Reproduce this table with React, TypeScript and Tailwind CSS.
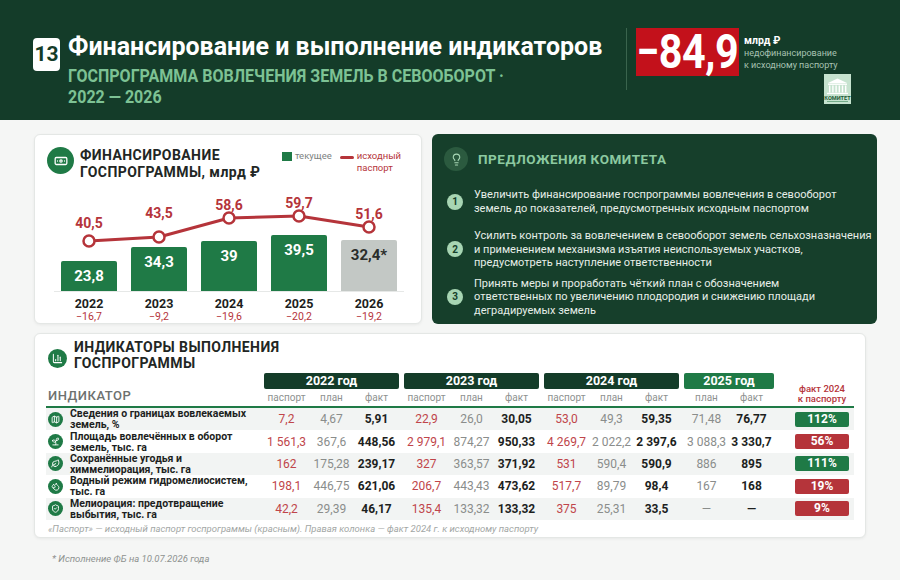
import {
  Banknote,
  ChartColumn,
  Droplets,
  Lightbulb,
  Map as MapIcon,
  ShieldCheck,
  Sprout,
  Leaf,
} from "lucide-react";
import type { LucideIcon } from "lucide-react";

type Bar = {
  year: string;
  value: string;
  h: number;
  diff: string;
  plan: string;
  py: number;
  ly: number;
  muted?: boolean;
};

// y values are measured from the top of the 97px chart box
const BARS: Bar[] = [
  { year: "2022", value: "23,8", h: 30, diff: "−16,7", plan: "40,5", py: 45, ly: 32 },
  { year: "2023", value: "34,3", h: 44, diff: "−9,2", plan: "43,5", py: 41, ly: 22 },
  { year: "2024", value: "39", h: 50, diff: "−19,6", plan: "58,6", py: 22, ly: 14 },
  { year: "2025", value: "39,5", h: 56, diff: "−20,2", plan: "59,7", py: 20, ly: 12 },
  { year: "2026", value: "32,4*", h: 51, diff: "−19,2", plan: "51,6", py: 31, ly: 23, muted: true },
];

const PROPOSALS: { gap: string; lines: string[] }[] = [
  {
    gap: "mt-0",
    lines: [
      "Увеличить финансирование госпрограммы вовлечения в севооборот",
      "земель до показателей, предусмотренных исходным паспортом",
    ],
  },
  {
    gap: "mt-[14px]",
    lines: [
      "Усилить контроль за вовлечением в севооборот земель сельхозназначения",
      "и применением механизма изъятия неиспользуемых участков,",
      "предусмотреть наступление ответственности",
    ],
  },
  {
    gap: "mt-[7px]",
    lines: [
      "Принять меры и проработать чёткий план с обозначением",
      "ответственных по увеличению плодородия и снижению площади",
      "деградируемых земель",
    ],
  },
];

type Group = { label: string; cols: string[]; tone: string };

const GROUPS: Group[] = [
  { label: "2022 год", cols: ["паспорт", "план", "факт"], tone: "bg-[#143c29]" },
  { label: "2023 год", cols: ["паспорт", "план", "факт"], tone: "bg-[#143c29]" },
  { label: "2024 год", cols: ["паспорт", "план", "факт"], tone: "bg-[#143c29]" },
  { label: "2025 год", cols: ["план", "факт"], tone: "bg-[#1f7a46]" },
];

type Row = {
  icon: LucideIcon;
  name: [string, string];
  years: string[][];
  pct: string;
  good: boolean;
};

const ROWS: Row[] = [
  {
    icon: MapIcon,
    name: ["Сведения о границах вовлекаемых", "земель, %"],
    years: [
      ["7,2", "4,67", "5,91"],
      ["22,9", "26,0", "30,05"],
      ["53,0", "49,3", "59,35"],
      ["71,48", "76,77"],
    ],
    pct: "112%",
    good: true,
  },
  {
    icon: Sprout,
    name: ["Площадь вовлечённых в оборот", "земель, тыс. га"],
    years: [
      ["1 561,3", "367,6", "448,56"],
      ["2 979,1", "874,27", "950,33"],
      ["4 269,7", "2 022,2", "2 397,6"],
      ["3 088,3", "3 330,7"],
    ],
    pct: "56%",
    good: false,
  },
  {
    icon: Leaf,
    name: ["Сохранённые угодья и", "химмелиорация, тыс. га"],
    years: [
      ["162", "175,28", "239,17"],
      ["327", "363,57", "371,92"],
      ["531", "590,4", "590,9"],
      ["886", "895"],
    ],
    pct: "111%",
    good: true,
  },
  {
    icon: Droplets,
    name: ["Водный режим гидромелиосистем,", "тыс. га"],
    years: [
      ["198,1", "446,75", "621,06"],
      ["206,7", "443,43", "473,62"],
      ["517,7", "89,79", "98,4"],
      ["167", "168"],
    ],
    pct: "19%",
    good: false,
  },
  {
    icon: ShieldCheck,
    name: ["Мелиорация: предотвращение", "выбытия, тыс. га"],
    years: [
      ["42,2", "29,39", "46,17"],
      ["135,4", "133,32", "133,32"],
      ["375", "25,31", "33,5"],
      ["—", "—"],
    ],
    pct: "9%",
    good: false,
  },
];

const CELL_TONE: Record<string, string> = {
  паспорт: "text-[#c0454a]",
  план: "text-[#8a8d8b]",
  факт: "font-bold text-[#1d1f1e]",
};

function Logo() {
  return (
    <svg width="27" height="30" viewBox="0 0 27 30">
      <rect width="27" height="30" fill="#c6e3cf" />
      <path d="M4 9 L13.5 4.5 L23 9 Z" fill="#ffffff" />
      <rect x="4" y="9.5" width="19" height="1.4" fill="#ffffff" />
      {[5, 8.2, 11.4, 14.6, 17.8, 21].map((x) => (
        <rect key={x} x={x} y="11.5" width="1.4" height="7" fill="#ffffff" />
      ))}
      <rect x="3" y="18.8" width="21" height="1.3" fill="#ffffff" />
      <text
        x="13.5"
        y="25.5"
        fontSize="5.6"
        fontWeight="700"
        textAnchor="middle"
        fill="#1c5a36"
        fontFamily="Roboto, sans-serif"
      >
        КОМИТЕТ
      </text>
      <rect x="3" y="27" width="21" height="0.8" fill="#5f9d77" />
    </svg>
  );
}

function Header() {
  return (
    <header className="flex h-[120px] bg-[#143c29]">
      <div className="flex w-[626px] items-start pl-[33px] pt-[33px]">
        <div className="mt-[5px] flex h-[33px] w-[27px] items-center justify-center rounded-[4px] bg-white text-[21px] font-bold text-[#143c29]">
          13
        </div>
        <div className="ml-[8px]">
          <h1 className="text-[25px] font-bold leading-[28px] text-white">
            Финансирование и выполнение индикаторов
          </h1>
          <div className="mt-[4px] origin-left scale-x-[0.89] whitespace-nowrap text-[18px] font-bold uppercase leading-[21px] text-[#7dc294]">
            Госпрограмма вовлечения земель в севооборот ·
            <br />
            2022 — 2026
          </div>
        </div>
      </div>
      <div className="mt-[28px] flex h-[62px] border-l border-[#3a644d] pl-[9px]">
        <div className="flex h-[48px] w-[103px] items-center justify-center bg-[#c3111b]">
          <span className="scale-x-[0.86] text-[48px] font-bold leading-none tracking-[-0.5px] text-white">
            −84,9
          </span>
        </div>
        <div className="ml-[5px] pt-[7px]">
          <div className="text-[10.5px] font-bold leading-[12px] text-white">млрд ₽</div>
          <div className="text-[9px] leading-[12px] text-[#a7c2b2]">недофинансирование</div>
          <div className="text-[9px] leading-[12px] text-[#a7c2b2]">к исходному паспорту</div>
          <div className="ml-[80px] mt-[3px]">
            <Logo />
          </div>
        </div>
      </div>
    </header>
  );
}

function FundingCard() {
  return (
    <div className="flex h-[190px] w-[388px] flex-col rounded-[6px] border border-[#e4e7e5] bg-white pl-[12px] pr-[20px] pt-[12px] shadow-[0_1px_3px_rgba(0,0,0,0.06)]">
      <div className="flex h-[30px] items-start">
        <div className="flex h-[27px] w-[27px] items-center justify-center rounded-full bg-[#1f7a46]">
          <Banknote size={14} color="#ffffff" strokeWidth={2.2} />
        </div>
        <div className="ml-[6px] whitespace-nowrap text-[14px] font-bold uppercase leading-[17px] tracking-[0.03em] text-[#222624]">
          Финансирование
          <br />
          госпрограммы, <span className="normal-case">млрд ₽</span>
        </div>
        <div className="ml-auto flex items-start pt-[3px]">
          <div className="mt-[2px] h-[9px] w-[10px] bg-[#1f7a46]" />
          <span className="ml-[3px] text-[9.5px] leading-[12px] text-[#7d817f]">текущее</span>
          <div className="ml-[8px] mt-[6px] h-[3px] w-[14px] rounded-full bg-[#b5343a]" />
          <span className="ml-[3px] text-[9.5px] leading-[12px] text-[#b5343a]">
            исходный
            <br />
            паспорт
          </span>
        </div>
      </div>
      <div className="relative ml-[7px] mt-[19px] flex h-[97px] w-[350px] items-end border-b border-[#e6e8e7]">
        {BARS.map((b) => (
          <div key={b.year} className="flex w-[70px] justify-center">
            <div
              className={`flex w-[56px] justify-center rounded-t-[2px] pt-[6px] text-[15px] font-bold leading-[18px] ${
                b.muted ? "bg-[#c3c8c5] text-[#2a2d2b]" : "bg-[#1f7a46] text-white"
              }`}
              style={{ height: b.h }}
            >
              {b.value}
            </div>
          </div>
        ))}
        <svg className="absolute left-0 top-0 overflow-visible" width="350" height="97">
          <polyline
            points={BARS.map((b, i) => `${35 + i * 70},${b.py}`).join(" ")}
            fill="none"
            stroke="#b5343a"
            strokeWidth="3"
            strokeLinejoin="round"
          />
          {BARS.map((b, i) => (
            <g key={b.year}>
              <circle cx={35 + i * 70} cy={b.py} r="5.5" fill="#ffffff" stroke="#b5343a" strokeWidth="2.5" />
              <text
                x={35 + i * 70}
                y={b.ly}
                textAnchor="middle"
                fontSize="14"
                fontWeight="700"
                fill="#b5343a"
                fontFamily="Roboto, sans-serif"
              >
                {b.plan}
              </text>
            </g>
          ))}
        </svg>
      </div>
      <div className="ml-[7px] flex w-[350px]">
        {BARS.map((b) => (
          <div key={b.year} className="w-[70px] text-center">
            <div className="mt-[5px] text-[12.5px] font-bold leading-[14px] text-[#1d1f1e]">{b.year}</div>
            <div className="text-[10.5px] leading-[12px] text-[#b5343a]">{b.diff}</div>
          </div>
        ))}
      </div>
    </div>
  );
}

function ProposalsCard() {
  return (
    <div className="h-[190px] w-[445px] rounded-[6px] bg-[#163f2b] pl-[12px] pt-[13px]">
      <div className="flex items-center">
        <div className="flex h-[24px] w-[24px] items-center justify-center rounded-full bg-[#2b5a3f]">
          <Lightbulb size={13} color="#a9d8b6" strokeWidth={2} />
        </div>
        <span className="ml-[10px] text-[13.5px] font-bold uppercase tracking-[0.04em] text-[#8cc9a0]">
          Предложения комитета
        </span>
      </div>
      <div className="mt-[17px] flex flex-col">
        {PROPOSALS.map((p, i) => (
          <div key={i} className={`flex items-center ${p.gap}`}>
            <div className="ml-[3px] flex h-[16px] w-[16px] shrink-0 items-center justify-center rounded-full bg-[#a7d5b3] text-[10px] font-bold text-[#163f2b]">
              {i + 1}
            </div>
            <p className="ml-[11px] whitespace-nowrap text-[11px] leading-[13.5px] text-[#e6eee8]">
              {p.lines.map((l, li) => (
                <span key={li} className="block">
                  {l}
                </span>
              ))}
            </p>
          </div>
        ))}
      </div>
    </div>
  );
}

function IndicatorsCard() {
  return (
    <div className="h-[205px] w-[832px] rounded-[6px] border border-[#e4e7e5] bg-white pl-[11px] pt-[5px] shadow-[0_1px_3px_rgba(0,0,0,0.06)]">
      <div className="ml-[2px] flex h-[32px] items-center">
        <div className="mt-[6px] flex h-[19px] w-[19px] items-center justify-center rounded-full bg-[#1f7a46]">
          <ChartColumn size={11} color="#ffffff" strokeWidth={2.2} />
        </div>
        <div className="ml-[7px] text-[14px] font-bold uppercase leading-[16px] tracking-[0.03em] text-[#222624]">
          Индикаторы выполнения
          <br />
          госпрограммы
        </div>
      </div>
      <div className="mt-[2px] w-[808px]">
        <div className="flex">
          <div className="flex w-[218px] items-end pb-[3px] pl-[2px]">
            <span className="text-[13px] font-medium uppercase leading-[14px] tracking-[0.04em] text-[#6d716f]">
              Индикатор
            </span>
          </div>
          <div className="flex gap-[5px]">
            {GROUPS.map((g) => (
              <div key={g.label} className="flex flex-col">
                <div
                  className={`h-[16px] rounded-[2px] text-center text-[12.5px] font-bold leading-[16px] text-white ${g.tone}`}
                >
                  {g.label}
                </div>
                <div className="flex h-[17px] items-center">
                  {g.cols.map((c) => (
                    <div key={c} className="w-[45px] text-center text-[10px] leading-[12px] text-[#8d918f]">
                      {c}
                    </div>
                  ))}
                </div>
              </div>
            ))}
          </div>
          <div className="flex flex-1 items-end justify-end pb-[2px] pr-[5px]">
            <div className="w-[54px] text-center text-[9.5px] font-medium leading-[10px] text-[#b5343a]">
              факт 2024
              <br />к паспорту
            </div>
          </div>
        </div>
        <div className="h-[2px] bg-[#1f7a46]" />
        {ROWS.map((r, ri) => {
          const Icon = r.icon;
          return (
            <div
              key={ri}
              className={`flex h-[22.4px] items-center ${ri % 2 === 0 ? "bg-[#f2f4f3]" : "bg-white"}`}
            >
              <div className="flex w-[218px] items-center">
                <div className="ml-[2px] flex h-[15px] w-[15px] shrink-0 items-center justify-center rounded-full bg-[#1f7a46]">
                  <Icon size={9} color="#ffffff" strokeWidth={2.4} />
                </div>
                <div className="ml-[7px] whitespace-nowrap text-[10.5px] font-bold leading-[11px] text-[#1d1f1e]">
                  {r.name[0]}
                  <br />
                  {r.name[1]}
                </div>
              </div>
              <div className="flex gap-[5px]">
                {GROUPS.map((g, gi) => (
                  <div key={g.label} className="flex">
                    {g.cols.map((c, ci) => (
                      <div
                        key={c}
                        className={`w-[45px] whitespace-nowrap text-center text-[12px] ${CELL_TONE[c]}`}
                      >
                        {r.years[gi][ci]}
                      </div>
                    ))}
                  </div>
                ))}
              </div>
              <div className="flex flex-1 justify-end pr-[5px]">
                <div
                  className={`h-[15px] w-[54px] rounded-[2px] text-center text-[12px] font-bold leading-[15px] text-white ${
                    r.good ? "bg-[#1f7a46]" : "bg-[#b5343a]"
                  }`}
                >
                  {r.pct}
                </div>
              </div>
            </div>
          );
        })}
        <div className="pl-[2px] pt-[3px] text-[9.5px] italic leading-[12px] text-[#a3a7a5]">
          «Паспорт» — исходный паспорт госпрограммы (красным). Правая колонка — факт 2024 г. к исходному паспорту
        </div>
      </div>
    </div>
  );
}

export default function App() {
  return (
    <div className="h-[580px] w-[900px] overflow-hidden bg-[#f5f6f5] font-[Roboto,'Noto_Sans',sans-serif]">
      <Header />
      <div className="pl-[34px] pt-[14px]">
        <div className="flex gap-[10px]">
          <FundingCard />
          <ProposalsCard />
        </div>
        <div className="mt-[9px]">
          <IndicatorsCard />
        </div>
        <div className="ml-[18px] mt-[14px] text-[9.5px] italic text-[#8e9290]">
          * Исполнение ФБ на 10.07.2026 года
        </div>
      </div>
    </div>
  );
}
